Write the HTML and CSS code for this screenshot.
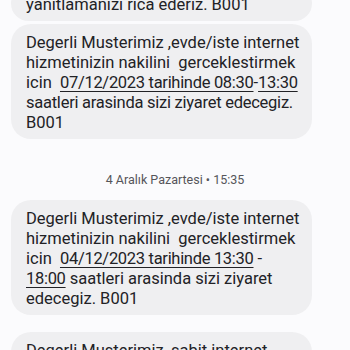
FILE: index.html
```html
<!DOCTYPE html>
<html lang="tr">
<head>
<meta charset="utf-8">
<link rel="stylesheet" href="styles.css">
</head>
<body>
<div class="thread">
  <div class="bubble first">yanıtlamanızı rica ederiz. B001</div>
  <div class="bubble">Degerli Musterimiz ,evde/iste internet<br>hizmetinizin nakilini&nbsp; gerceklestirmek<br>icin&nbsp; <span class="link">07/12/2023 tarihinde 08:30</span>-<span class="link">13:30</span><br><span class="tight">saatleri arasinda sizi ziyaret edecegiz.</span><br>B001</div>
  <div class="stamp">4 Aralık Pazartesi • 15:35</div>
  <div class="bubble">Degerli Musterimiz ,evde/iste internet<br>hizmetinizin nakilini&nbsp; gerceklestirmek<br>icin&nbsp; <span class="link">04/12/2023 tarihinde 13:30</span> -<br><span class="link">18:00</span> saatleri arasinda sizi ziyaret<br>edecegiz. B001</div>
  <div class="bubble next">Degerli Musterimiz ,sabit internet<br>hizmetinizin nakilini</div>
</div>
</body>
</html>
```
FILE: styles.css
```css
html, body {
  margin: 0;
  padding: 0;
  background: #fbfbfd;
  overflow: hidden;
}
.thread {
  display: flex;
  flex-direction: column;
  align-items: flex-start;
  font-family: Roboto, "Noto Sans", sans-serif;
}
.bubble {
  box-sizing: border-box;
  width: 301px;
  margin-left: 11px;
  background: #efeff1;
  border-radius: 20px;
  padding: 9px 10px 6px 15px;
  font-size: 16.5px;
  line-height: 20px;
  color: #222226;
  white-space: nowrap;
}
.first {
  margin-top: -14px;
}
.bubble + .bubble {
  margin-top: 3px;
}
.bubble.next {
  margin-top: 17px;
}
.stamp {
  align-self: center;
  margin: 33px 0 12px;
  font-size: 12.5px;
  line-height: 16px;
  color: #55555a;
}
.link {
  text-decoration: underline;
  text-decoration-thickness: 1px;
  text-underline-offset: 3px;
  letter-spacing: -0.3px;
}
.tight {
  letter-spacing: -0.25px;
}
```
